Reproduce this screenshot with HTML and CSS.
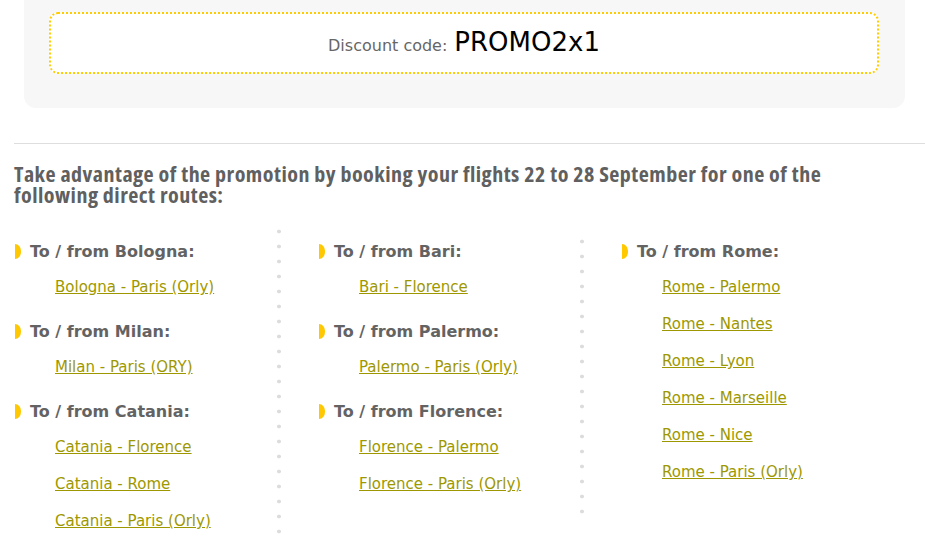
FILE: index.html
```html
<!DOCTYPE html>
<html lang="en">
<head>
<meta charset="utf-8">
<title>Promo</title>
<link rel="stylesheet" href="styles.css">
</head>
<body>
<div class="promo-box">
  <div class="code-box">
    <span class="code-label">Discount code:</span>
    <span class="code-value">PROMO2x1</span>
  </div>
</div>

<div class="main">
  <hr class="rule">
  <h2 class="title">Take advantage of the promotion by booking your flights 22 to 28 September for one of the following direct routes:</h2>

  <div class="routes">
    <div class="col">
      <div class="group">
        <h3 class="city"><span class="bullet"></span>To / from Bologna:</h3>
        <ul class="links">
          <li><a href="#">Bologna - Paris (Orly)</a></li>
        </ul>
      </div>
      <div class="group">
        <h3 class="city"><span class="bullet"></span>To / from Milan:</h3>
        <ul class="links">
          <li><a href="#">Milan - Paris (ORY)</a></li>
        </ul>
      </div>
      <div class="group">
        <h3 class="city"><span class="bullet"></span>To / from Catania:</h3>
        <ul class="links">
          <li><a href="#">Catania - Florence</a></li>
          <li><a href="#">Catania - Rome</a></li>
          <li><a href="#">Catania - Paris (Orly)</a></li>
        </ul>
      </div>
    </div>
    <div class="divider divider-a"></div>
    <div class="col">
      <div class="group">
        <h3 class="city"><span class="bullet"></span>To / from Bari:</h3>
        <ul class="links">
          <li><a href="#">Bari - Florence</a></li>
        </ul>
      </div>
      <div class="group">
        <h3 class="city"><span class="bullet"></span>To / from Palermo:</h3>
        <ul class="links">
          <li><a href="#">Palermo - Paris (Orly)</a></li>
        </ul>
      </div>
      <div class="group">
        <h3 class="city"><span class="bullet"></span>To / from Florence:</h3>
        <ul class="links">
          <li><a href="#">Florence - Palermo</a></li>
          <li><a href="#">Florence - Paris (Orly)</a></li>
        </ul>
      </div>
    </div>
    <div class="divider divider-b"></div>
    <div class="col">
      <div class="group">
        <h3 class="city"><span class="bullet"></span>To / from Rome:</h3>
        <ul class="links">
          <li><a href="#">Rome - Palermo</a></li>
          <li><a href="#">Rome - Nantes</a></li>
          <li><a href="#">Rome - Lyon</a></li>
          <li><a href="#">Rome - Marseille</a></li>
          <li><a href="#">Rome - Nice</a></li>
          <li><a href="#">Rome - Paris (Orly)</a></li>
        </ul>
      </div>
    </div>
  </div>
</div>
</body>
</html>
```

FILE: styles.css
```css
* { box-sizing: border-box; }

html, body {
  margin: 0;
  padding: 0;
  background: #fff;
  font-family: "DejaVu Sans", Verdana, sans-serif;
  overflow: hidden;
}

.promo-box {
  margin: 0 20px 0 24px;
  height: 108px;
  padding: 12px 26px 0 25px;
  background: #f7f7f7;
  border-radius: 0 0 12px 12px;
}

.code-box {
  height: 62px;
  border: 2px dotted #ffcc00;
  border-radius: 9px;
  background: #fff;
  display: flex;
  align-items: baseline;
  justify-content: center;
  padding-top: 13px;
  gap: 7px;
}

.code-label {
  font-size: 16px;
  color: #666;
}

.code-value {
  font-size: 26px;
  color: #000;
}

.main {
  padding-left: 14px;
}

.rule {
  margin: 35px 0 0 0;
  border: 0;
  border-top: 1px solid #dedede;
  height: 0;
}

.title {
  margin: 19px 0 0 0;
  font-family: "Open Sans", sans-serif;
  font-stretch: condensed;
  font-weight: 700;
  font-size: 22px;
  line-height: 21px;
  letter-spacing: 0.47px;
  color: #606060;
  width: 830px;
}

.routes {
  margin-top: 20px;
  display: grid;
  grid-template-columns: 263px 41px 262px 41px 1fr;
  align-items: start;
}

.col {
  padding-top: 17px;
}

.group + .group {
  margin-top: 25px;
}

.city {
  margin: 0;
  display: flex;
  align-items: center;
  font-size: 16px;
  line-height: 20px;
  font-weight: bold;
  color: #636363;
}

.bullet {
  display: inline-block;
  flex: none;
  width: 6px;
  height: 15px;
  margin: -2px 9px 0 1px;
  background: #ffc800;
  border-radius: 0 6px 6px 0 / 0 7px 7px 0;
}

.links {
  list-style: none;
  margin: 15px 0 0 0;
  padding: 0 0 0 41px;
}

.links li {
  font-size: 15px;
  line-height: 20px;
}

.links li + li {
  margin-top: 17px;
}

.links a {
  color: #9e9800;
  text-decoration: underline;
}

.divider {
  width: 4px;
  background-image: radial-gradient(circle at 2px 7.5px, #dcdcdc 1.6px, transparent 2.2px);
  background-size: 4px 15px;
  background-repeat: repeat-y;
}

.divider-a {
  margin-top: -1px;
  height: 315px;
}

.divider-b {
  margin-top: 9px;
  height: 285px;
}
```
